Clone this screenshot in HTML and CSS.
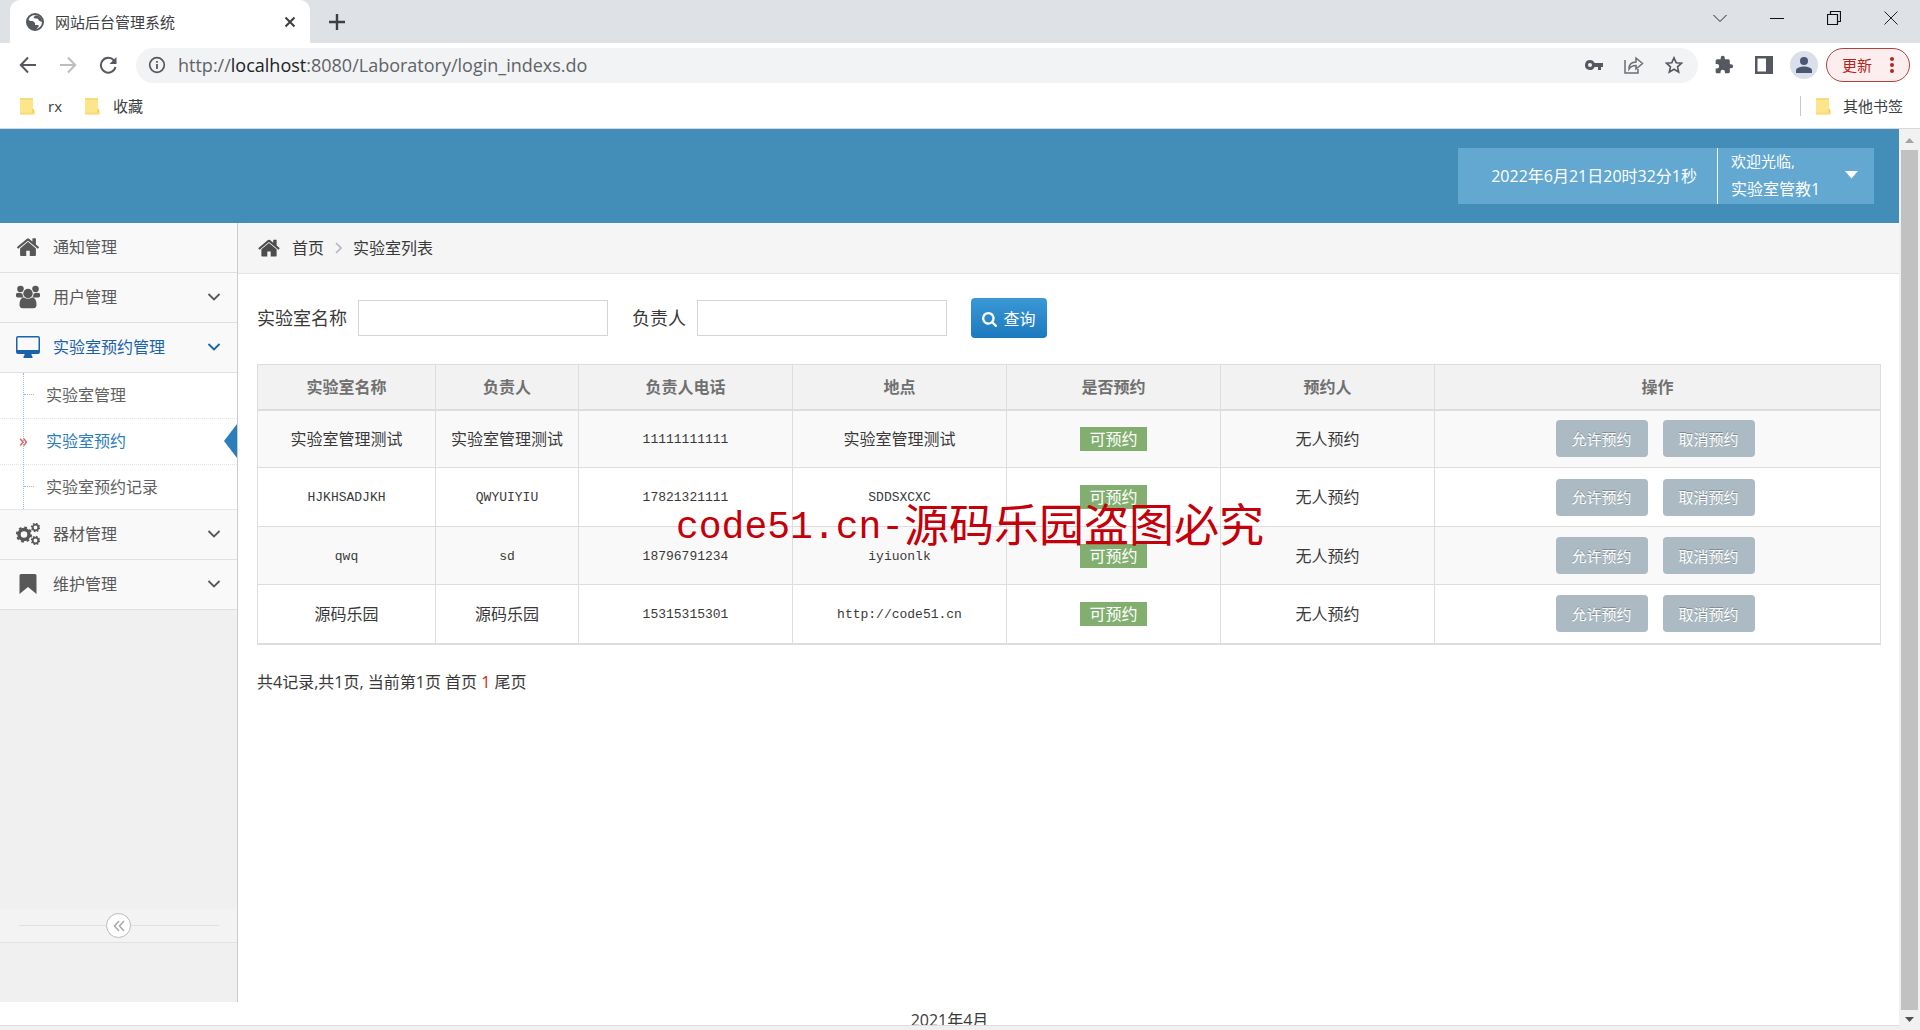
FILE: index.html
```html
<!DOCTYPE html>
<html lang="zh-CN">
<head>
<meta charset="utf-8">
<title>网站后台管理系统</title>
<link rel="stylesheet" href="styles.css">
</head>
<body>
<svg class="sprite" aria-hidden="true">
  <symbol id="home" viewBox="64 230 1664 1310"><path fill="currentColor" d="M1472 992v480q0 26-19 45t-45 19h-384v-384h-256v384h-384q-26 0-45-19t-19-45v-480q0-1 .5-3t.5-3l575-474 575 474q1 2 1 6zm223-69l-62 74q-8 9-21 11h-3q-13 0-21-7l-692-577-692 577q-12 8-24 7-13-2-21-11l-62-74q-8-10-7-23.5t11-21.5l719-599q32-26 76-26t76 26l244 204v-195q0-14 9-23t23-9h192q14 0 23 9t9 23v408l219 182q10 8 11 21.5t-7 23.5z"/></symbol>
  <symbol id="chev" viewBox="0 0 14 14"><path d="M1.500 4l5.500 5.500 5.500-5.500" fill="none" stroke="currentColor" stroke-width="1.800"/></symbol>
  <symbol id="folder" viewBox="0 0 16 18"><path d="M1 1h13v11l2 2v3.500H1z" fill="#fde58c"/><path d="M1 1h13v2H1zM1 15.500h13v2H1z" fill="#f7dc7c"/><path d="M13.500 11.500c2 0 2 5 0 5z" fill="#f3cd55"/></symbol>
</svg>

<header class="browser">
  <div class="tabstrip">
    <div class="tab">
      <svg width="18" height="18" viewBox="0 0 18 18"><circle cx="9" cy="9" r="8" fill="#fff" stroke="#55595f" stroke-width="2"/><path d="M9 1a8 8 0 0 0-7 5l2 2h3l2 2v2h3l1 1-3 3.500A8 8 0 0 1 1 9L1 6 6 1zM9 2.500h3l3 2.500 1.500 4-3-1-2-2.500H9l-1.500-1z" fill="#55595f"/></svg>
      <span class="tab-title">网站后台管理系统</span>
      <button class="plain" aria-label="关闭标签页"><svg width="12" height="12" viewBox="0 0 12 12"><path d="M1.500 1.500l9 9m0-9l-9 9" stroke="#3c4043" stroke-width="2"/></svg></button>
    </div>
    <button class="plain newtab" aria-label="新标签页"><svg width="16" height="16" viewBox="0 0 16 16"><path d="M8 0v16M0 8h16" stroke="#3c4043" stroke-width="2.400"/></svg></button>
    <div class="window-controls">
      <button class="plain" aria-label="搜索标签页"><svg width="14" height="14" viewBox="0 0 14 14"><path d="M.5 4L7 10.500 13.500 4" fill="none" stroke="#222"/></svg></button>
      <button class="plain" aria-label="最小化"><svg width="14" height="14" viewBox="0 0 14 14"><path d="M0 7.500h14" stroke="#111"/></svg></button>
      <button class="plain" aria-label="还原"><svg width="14" height="14" viewBox="0 0 14 14"><path d="M.5 3.500h10v10H.5zM3.500 3V.5h10v10H11" fill="none" stroke="#111" stroke-width="1.200"/></svg></button>
      <button class="plain" aria-label="关闭"><svg width="14" height="14" viewBox="0 0 14 14"><path d="M.5.500l13 13m0-13l-13 13" stroke="#222"/></svg></button>
    </div>
  </div>
  <div class="toolbar">
    <button class="plain" aria-label="后退"><svg width="18" height="18" viewBox="0 0 18 18"><path d="M17 9H2m7-7.500L1.800 9 9 16.500" fill="none" stroke="#55595f" stroke-width="2"/></svg></button>
    <button class="plain" aria-label="前进"><svg width="18" height="18" viewBox="0 0 18 18"><path d="M1 9h15M9 1.500L16.200 9 9 16.500" fill="none" stroke="#bbbdc0" stroke-width="2"/></svg></button>
    <button class="plain" aria-label="重新加载"><svg width="18" height="18" viewBox="0 0 18 18"><path d="M15 4.500A7.400 7.400 0 1 0 16.500 11" fill="none" stroke="#55595f" stroke-width="2"/><path d="M17.500 1v7h-7z" fill="#55595f"/></svg></button>
    <div class="omnibox">
      <svg width="18" height="18" viewBox="0 0 18 18"><circle cx="9" cy="9" r="7.300" fill="none" stroke="#55595f" stroke-width="1.700"/><path d="M9 8v5M9 5v1.800" stroke="#55595f" stroke-width="1.800"/></svg>
      <div class="url" role="textbox" contenteditable="true" spellcheck="false" aria-label="地址">http://<span class="host">localhost</span>:8080/Laboratory/login_indexs.do</div>
      <button class="plain" aria-label="密码"><svg width="18" height="18" viewBox="0 0 18 18"><path fill="#55595f" fill-rule="evenodd" d="M5 4a5 5 0 1 0 4.600 7H13v3h3v-3h2V7H9.600A5 5 0 0 0 5 4zm0 3a2 2 0 1 1 0 4 2 2 0 0 1 0-4z"/></svg></button>
      <button class="plain" aria-label="分享"><svg width="20" height="18" viewBox="0 0 20 18"><path d="M1 4v13h13v-4M5 13c0-5 3-7 7-7V2l6.500 5.500-6.500 5.500V9.500c-3 0-5 .500-7 3.500z" fill="none" stroke="#6b6e73" stroke-width="1.500"/></svg></button>
      <button class="plain" aria-label="添加书签"><svg width="18" height="18" viewBox="0 0 18 18"><path d="M9 1.800l2.200 4.900 5.300.500-4 3.600 1.200 5.200L9 13.200 4.300 16l1.200-5.200-4-3.600 5.300-.500z" fill="none" stroke="#55595f" stroke-width="1.600"/></svg></button>
    </div>
    <button class="plain" aria-label="扩展程序"><svg width="20" height="20" viewBox="0 0 24 24"><path fill="#55595f" d="M20.500 11H19V7a2 2 0 0 0-2-2h-4V3.500a2.500 2.500 0 0 0-5 0V5H4a2 2 0 0 0-2 2v3.800h1.500a2.700 2.700 0 0 1 0 5.400H2V20c0 1.100.900 2 2 2h3.800v-1.500a2.700 2.700 0 0 1 5.400 0V22H17a2 2 0 0 0 2-2v-4h1.500a2.500 2.500 0 0 0 0-5z"/></svg></button>
    <button class="plain" aria-label="侧边栏"><svg width="18" height="18" viewBox="0 0 18 18"><path fill="#55595f" fill-rule="evenodd" d="M0 0h18v18H0zM2.500 2.500v13H11v-13z"/></svg></button>
    <button class="plain avatar" aria-label="个人资料"><svg width="16" height="16" viewBox="0 0 16 16"><circle cx="8" cy="4" r="4" fill="#4a5672"/><path d="M0 16v-2.500C0 10.500 5 9.500 8 9.500s8 1 8 4V16z" fill="#4a5672"/></svg></button>
    <button class="update">更新<svg width="4" height="16" viewBox="0 0 4 16"><circle cx="2" cy="2" r="2"/><circle cx="2" cy="8" r="2"/><circle cx="2" cy="14" r="2"/></svg></button>
  </div>
  <nav class="bookmarks">
    <a href="#"><svg width="16" height="18"><use href="#folder"/></svg>rx</a>
    <a href="#"><svg width="16" height="18"><use href="#folder"/></svg>收藏</a>
    <a href="#" class="other"><svg width="16" height="18"><use href="#folder"/></svg>其他书签</a>
  </nav>
</header>

<div class="viewport">
  <div class="page">
    <header class="banner">
      <div class="clock">2022年6月21日20时32分1秒</div>
      <button class="user">
        <span class="user-text"><small>欢迎光临,</small><span>实验室管教1</span></span>
        <svg width="13" height="8" viewBox="0 0 13 8"><path d="M0 0h13L6.500 7.500z" fill="#fff"/></svg>
      </button>
    </header>

    <div class="columns">
      <aside class="sidebar">
        <nav>
          <a class="item" href="#"><svg width="24" height="18"><use href="#home"/></svg><span>通知管理</span></a>
          <a class="item" href="#"><svg width="24" height="24" viewBox="0 0 24 24"><g fill="currentColor"><circle cx="4.500" cy="4" r="3.300"/><circle cx="19.500" cy="4" r="3.300"/><path d="M0 8.500q2.500-1 4.500-.500l3 1v3.500H1.500Q0 12 0 11zM24 8.500q-2.500-1-4.500-.500l-3 1v3.500h6Q24 12 24 11z"/><circle cx="12" cy="8.500" r="5.600" fill="#f9f9f9"/><circle cx="12" cy="8.500" r="4.700"/><path d="M3.500 20q0-7.500 4.500-7.500 4 2.600 8 0 4.500 0 4.500 7.500 0 3-3 3.200h-11q-3-.200-3-3.200z"/></g></svg><span>用户管理</span><svg class="arrow" width="14" height="14"><use href="#chev"/></svg></a>
          <a class="item open" href="#"><svg width="24" height="22" viewBox="0 0 24 22"><path fill="currentColor" fill-rule="evenodd" d="M2 0h20q2 0 2 2v14q0 2-2 2h-6.500q0 2 1 2.500V22h-9v-1.500q1-.500 1-2.500H2q-2 0-2-2V2Q0 0 2 0zm-.500 1.500V14h21V1.500z"/></svg><span>实验室预约管理</span><svg class="arrow" width="14" height="14"><use href="#chev"/></svg></a>
          <ul class="sub">
            <li><a href="#">实验室管理</a></li>
            <li class="active"><a href="#">实验室预约</a></li>
            <li><a href="#">实验室预约记录</a></li>
          </ul>
          <a class="item" href="#"><svg width="24" height="22" viewBox="0 0 24 22"><g fill="none" stroke="currentColor"><circle cx="8" cy="11.500" r="5" stroke-width="3.400"/><circle cx="8" cy="11.500" r="7.100" stroke-width="2" stroke-dasharray="2.800 2.776"/><circle cx="19.500" cy="4.500" r="2.800" stroke-width="1.800"/><circle cx="19.500" cy="4.500" r="4" stroke-width="1.400" stroke-dasharray="1.600 1.542"/><circle cx="19.500" cy="17.500" r="2.800" stroke-width="1.800"/><circle cx="19.500" cy="17.500" r="4" stroke-width="1.400" stroke-dasharray="1.600 1.542"/></g></svg><span>器材管理</span><svg class="arrow" width="14" height="14"><use href="#chev"/></svg></a>
          <a class="item" href="#"><svg width="24" height="20" viewBox="0 0 24 20"><path fill="currentColor" d="M5 0h14q1.500 0 1.500 1.500V20L12 13l-8.500 7V1.500Q3.500 0 5 0z"/></svg><span>维护管理</span><svg class="arrow" width="14" height="14"><use href="#chev"/></svg></a>
        </nav>
        <div class="collapse">
          <button aria-label="收起菜单"><svg width="12" height="12" viewBox="0 0 12 12"><path d="M6 1L1.500 6 6 11M11 1L6.500 6 11 11" fill="none" stroke="#aaa" stroke-width="1.600"/></svg></button>
        </div>
      </aside>

      <main>
        <nav class="crumbs">
          <a href="#"><svg width="22" height="18"><use href="#home"/></svg>首页</a>
          <svg width="7" height="12" viewBox="0 0 7 12"><path d="M1 1l5 5-5 5" fill="none" stroke="#b2b6bf" stroke-width="1.600"/></svg>
          <span>实验室列表</span>
        </nav>
        <div class="content">
          <form class="search">
            <label for="lab">实验室名称</label><input id="lab" type="text">
            <label for="owner">负责人</label><input id="owner" type="text">
            <button type="button"><svg width="15" height="15" viewBox="64 128 1664 1664"><path fill="#fff" d="M1216 832q0-185-131.500-316.500t-316.500-131.500-316.500 131.500-131.500 316.500 131.500 316.500 316.500 131.500 316.500-131.500 131.500-316.500zm512 832q0 52-38 90t-90 38q-54 0-90-38l-343-342q-179 124-399 124-143 0-273.500-55.500t-225-150-150-225-55.500-273.500 55.500-273.500 150-225 225-150 273.500-55.500 273.500 55.500 225 150 150 225 55.500 273.500q0 220-124 399l343 343q37 37 37 90z"/></svg>查询</button>
          </form>
          <table>
            <colgroup><col class="c-name"><col class="c-owner"><col class="c-std"><col class="c-std"><col class="c-std"><col class="c-std"><col></colgroup>
            <thead><tr><th>实验室名称</th><th>负责人</th><th>负责人电话</th><th>地点</th><th>是否预约</th><th>预约人</th><th>操作</th></tr></thead>
            <tbody>
              <tr><td>实验室管理测试</td><td>实验室管理测试</td><td class="latin">11111111111</td><td>实验室管理测试</td><td><span class="badge">可预约</span></td><td>无人预约</td><td><div class="actions"><button>允许预约</button><button>取消预约</button></div></td></tr>
              <tr><td class="latin">HJKHSADJKH</td><td class="latin">QWYUIYIU</td><td class="latin">17821321111</td><td class="latin">SDDSXCXC</td><td><span class="badge">可预约</span></td><td>无人预约</td><td><div class="actions"><button>允许预约</button><button>取消预约</button></div></td></tr>
              <tr><td class="latin">qwq</td><td class="latin">sd</td><td class="latin">18796791234</td><td class="latin">iyiuonlk</td><td><span class="badge">可预约</span></td><td>无人预约</td><td><div class="actions"><button>允许预约</button><button>取消预约</button></div></td></tr>
              <tr><td>源码乐园</td><td>源码乐园</td><td class="latin">15315315301</td><td class="latin">http://code51.cn</td><td><span class="badge">可预约</span></td><td>无人预约</td><td><div class="actions"><button>允许预约</button><button>取消预约</button></div></td></tr>
            </tbody>
          </table>
          <p class="pager">共4记录,共1页, 当前第1页 <a href="#">首页</a> <b>1</b> <a href="#">尾页</a></p>
        </div>
      </main>
    </div>
    <footer class="foot">2021年4月</footer>
    <div class="watermark"><span>code51.cn-</span>源码乐园盗图必究</div>
  </div>
  <div class="scrollbar" aria-hidden="true">
    <svg width="17" height="21" viewBox="0 0 17 21"><path d="M4 14h9L8.500 9z" fill="#a3a3a3"/></svg>
    <div class="thumb"></div>
    <svg width="17" height="16" viewBox="0 0 17 16"><path d="M4 7h9l-4.500 5z" fill="#505050"/></svg>
  </div>
</div>
</body>
</html>
```

FILE: styles.css
```css
* { box-sizing: border-box; }

body {
  margin: 0;
  height: 100vh;
  display: flex;
  flex-direction: column;
  overflow: hidden;
  background: #fff;
  color: #393939;
  font: 16px/24px "Open Sans", "Noto Sans CJK SC", sans-serif;
}

a { color: inherit; text-decoration: none; }
button { font: inherit; margin: 0; padding: 0; border: 0; cursor: pointer; }
svg { display: block; flex: none; }
.sprite { position: absolute; width: 0; height: 0; }
.plain { background: none; display: flex; align-items: center; justify-content: center; }

/* Browser frame */
.browser { flex: none; color: #3c4043; font-size: 15px; }
.tabstrip { display: flex; height: 43px; padding: 0 1px 0 10px; background: #dee1e6; }
.tab {
  display: flex;
  align-items: center;
  gap: 11px;
  width: 300px;
  padding: 0 14px 0 16px;
  background: #fff;
  border-radius: 10px 10px 0 0;
}
.tab-title { flex: 1; }
.newtab { width: 54px; }
.window-controls { display: flex; margin-left: auto; height: 36px; }
.window-controls .plain { width: 57px; }

.toolbar { display: flex; align-items: center; gap: 12px; height: 44px; padding: 0 10px 0 14px; }
.toolbar .plain { width: 28px; height: 28px; }
.omnibox {
  flex: 1;
  display: flex;
  align-items: center;
  gap: 12px;
  height: 35px;
  margin-left: 2px;
  padding: 0 10px 0 12px;
  border-radius: 18px;
  background: #f1f3f4;
}
.url { flex: 1; font-size: 18px; color: #5f6368; outline: 0; }
.host { color: #202124; }
.toolbar .avatar { border-radius: 50%; background: #dadfe9; }
.update {
  display: flex;
  align-items: center;
  justify-content: space-between;
  width: 84px;
  height: 34px;
  margin-left: -4px;
  padding: 0 15px;
  border: 1px solid #b3413b;
  border-radius: 17px;
  background: #fceeee;
  color: #b3261e;
  fill: #b3261e;
}

.bookmarks { display: flex; gap: 22px; height: 42px; padding: 0 17px 0 19px; border-bottom: 1px solid #d5d8dc; }
.bookmarks a { display: flex; align-items: center; gap: 13px; height: 38px; }
.bookmarks .other { height: 20px; gap: 12px; margin: 9px 0 0 auto; padding-left: 14px; border-left: 1px solid #c6cacf; }

/* Page and its scrollbar */
.viewport { flex: 1; min-height: 0; display: flex; border-bottom: 4px solid #f0f0f0; }
.page { position: relative; flex: 1; min-width: 0; display: flex; flex-direction: column; overflow: hidden; border-bottom: 1px solid #dcdcdc; }
.scrollbar { display: flex; flex-direction: column; align-items: center; width: 21px; background: #f1f1f1; }
.thumb { flex: 1; width: 17px; background: #c1c1c1; }

.banner {
  flex: none;
  display: flex;
  align-items: center;
  justify-content: flex-end;
  height: 94px;
  padding-right: 25px;
  background: #438eb9;
  color: #fff;
}
.clock { padding: 0 20px 0 33px; height: 56px; line-height: 56px; background: #62a8d1; border-right: 1px solid #fff; }
.user {
  display: flex;
  align-items: center;
  justify-content: space-between;
  width: 156px;
  height: 56px;
  padding: 0 16px 2px 13px;
  background: #62a8d1;
  color: #fff;
  text-align: left;
}
.user-text { display: flex; flex-direction: column; line-height: 28px; }
.user-text small { font-size: 15px; }

.columns { flex: 1; display: flex; }
.sidebar { width: 238px; background: #f0f0f0; border-right: 1px solid #ccc; color: #585858; display: flex; flex-direction: column; }
.item {
  display: flex;
  align-items: center;
  gap: 13px;
  height: 50px;
  padding: 0 16px 2px;
  background: #f9f9f9;
  border-bottom: 1px solid #e0e0e0;
}
.arrow { margin-left: auto; }
.open { color: #1963aa; }

.sub { position: relative; margin: 0; padding: 0; list-style: none; background: #fff; border-bottom: 1px solid #e5e5e5; color: #616161; }
.sub::before { content: ""; position: absolute; left: 23px; top: 0; bottom: 0; border-left: 1px dotted #9dbdd6; }
.sub li { position: relative; height: 46px; border-bottom: 1px dotted #e4e4e4; }
.sub li:last-child { height: 44px; border-bottom: 0; }
.sub a { display: block; line-height: 44px; padding-left: 46px; }
.sub a::before { content: ""; position: absolute; left: 24px; top: 21px; width: 10px; border-top: 1px dotted #9dbdd6; }
.sub .active { color: #2b7dbc; }
.sub .active a::before { content: "»"; left: 19px; top: 0; line-height: 42px; border: 0; font-size: 18px; color: #cf5b5b; }
.sub .active::after { content: ""; position: absolute; right: 0; top: 5px; border: solid transparent; border-width: 17px 13px 17px 0; border-right-color: #2b7dbc; }

.collapse {
  display: flex;
  justify-content: center;
  align-items: center;
  height: 34px;
  margin: auto 0 59px;
  border-bottom: 1px solid #e0e0e0;
  background: linear-gradient(#e0e0e0, #e0e0e0) center / 200px 1px no-repeat #f3f3f3;
}
.collapse button { display: flex; align-items: center; justify-content: center; width: 25px; height: 25px; border: 1px solid #bbb; border-radius: 50%; background: #fff; }

main { flex: 1; min-width: 0; }
.crumbs { display: flex; align-items: center; gap: 11px; height: 51px; padding-left: 20px; background: #f5f5f5; border-bottom: 1px solid #e5e5e5; }
.crumbs a { display: flex; align-items: center; gap: 12px; }
.crumbs svg { color: #4c4c4c; }
.content { padding: 24px 18px 24px 19px; }

.search { display: flex; align-items: center; font-size: 18px; }
.search input { width: 250px; height: 36px; margin: 0 24px 0 11px; padding: 4px 8px; border: 1px solid #d5d5d5; font: inherit; }
.search button {
  display: flex;
  align-items: center;
  justify-content: center;
  gap: 6px;
  width: 76px;
  height: 40px;
  padding-top: 2px;
  border-radius: 4px;
  background: linear-gradient(#3b98d6, #1b79be);
  color: #fff;
  font-size: 16px;
}

table { width: 100%; margin-top: 26px; table-layout: fixed; border-collapse: collapse; border: 1px solid #ddd; border-bottom-width: 2px; text-align: center; }
.c-name { width: 178px; }
.c-owner { width: 143px; }
.c-std { width: 214px; }
th, td { padding: 0; border: 1px solid #ddd; }
th { height: 45px; background: #f2f2f2; border-bottom-width: 2px; color: #707070; }
td { height: 58px; }
tbody tr:nth-child(odd) { background: #f9f9f9; }
tbody tr:nth-child(even) td { height: 59px; }
.latin { padding-top: 2px; font-family: "Liberation Mono", monospace; font-size: 13px; }
.badge { display: inline-block; padding: 0 9px; background: #82af6f; color: #fff; }
.actions { display: flex; justify-content: center; gap: 15px; padding-right: 5px; }
.actions button { width: 92px; height: 37px; border-radius: 4px; background: #abbac3; color: #fff; font-size: 15px; text-shadow: 0 -1px 0 rgba(0, 0, 0, .25); }

.pager { margin: 25px 0 0; }
.pager b { color: #d6230b; font-weight: 400; }
.foot { flex: none; height: 23px; padding-top: 6px; text-align: center; }

/* Copyright notice printed over the list */
.watermark { position: absolute; left: 676px; top: 366px; display: flex; line-height: 60px; font-size: 45px; color: #c4000a; white-space: nowrap; pointer-events: none; }
.watermark span { font-family: "Liberation Mono", monospace; font-size: 38px; line-height: 66px; }
```
